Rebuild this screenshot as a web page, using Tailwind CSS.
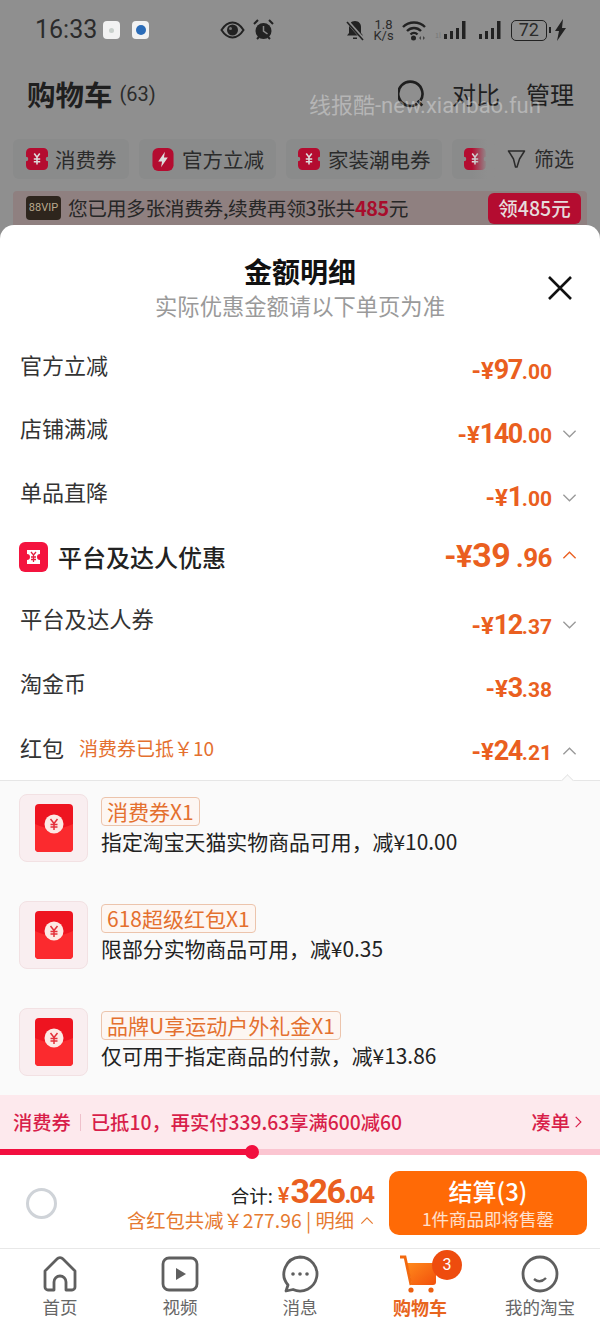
<!DOCTYPE html>
<html>
<head>
<meta charset="utf-8">
<script src="https://cdn.jsdelivr.net/npm/@tailwindcss/browser@4"></script>
</head>
<body class="bg-[#8f8f8f] font-['Noto_Sans_CJK_SC',sans-serif]">
<svg class="hidden">
  <symbol id="coupon" viewBox="0 0 24 24">
    <path d="M5 0h14a5 5 0 0 1 5 5v4.500a2.500 2.500 0 0 0 0 5V19a5 5 0 0 1-5 5H5a5 5 0 0 1-5-5v-4.500a2.500 2.500 0 0 0 0-5V5a5 5 0 0 1 5-5z" fill="currentColor"/>
    <path d="M9 6l3 4 3-4M12 10v8M8.500 12h7M8.500 15h7" fill="none" stroke="#ddd" stroke-width="1.700"/>
  </symbol>
  <symbol id="envelope" viewBox="0 0 38 48">
    <rect width="38" height="48" rx="4" fill="#ee1420"/>
    <path d="M0 20q19 9 38 0v24a4 4 0 0 1-4 4H4a4 4 0 0 1-4-4z" fill="#fb2a2e"/>
    <circle cx="19" cy="20" r="9.500" fill="#fde9e4"/>
    <path d="M15.500 15l3.500 4.500 3.500-4.500M19 19.500v6.500M15.500 20.500h7M15.500 23h7" fill="none" stroke="#e3303a" stroke-width="1.500"/>
  </symbol>
  <symbol id="chev" viewBox="0 0 16 10">
    <path d="M1.500 1.500 8 8l6.500-6.500" fill="none" stroke="currentColor" stroke-width="1.400"/>
  </symbol>
</svg>

<!-- dimmed cart page behind the sheet -->
<div class="relative h-[225px] overflow-hidden text-[#1f1f1f]">
  <div class="flex items-center h-[60px] pl-[35px] pr-[33px]">
    <span class="text-[25px] font-['Roboto',sans-serif] text-[#2b2b2b] w-[68px]">16:33</span>
    <span class="w-[17px] h-[18px] rounded-[4px] bg-[#f2f2f2] flex items-center justify-center"><span class="w-[5px] h-[5px] rounded-full bg-[#c9d0cc]"></span></span>
    <span class="w-[17px] h-[18px] rounded-[4px] bg-[#f2f2f2] flex items-center justify-center ml-[12px]"><span class="w-[10px] h-[10px] rounded-full bg-[#2b6cb8]"></span></span>
    <svg class="ml-[71px]" width="25" height="18" viewBox="0 0 25 18"><path d="M1.500 9C5 3.500 8.500 1.500 12.500 1.500S20 3.500 23.500 9C20 14.500 16.500 16.500 12.500 16.500S5 14.500 1.500 9z" fill="none" stroke="#222" stroke-width="2"/><circle cx="12.500" cy="9" r="5.500" fill="#222"/><circle cx="10.500" cy="7.500" r="1.500" fill="#777"/></svg>
    <svg class="ml-[8px]" width="21" height="22" viewBox="0 0 21 22"><circle cx="10.500" cy="12" r="8" fill="#222"/><path d="M10.500 7v5l4 3" fill="none" stroke="#888" stroke-width="1.500"/><path d="M1 5l4-4M20 5l-4-4M4 20l2-2M17 20l-2-2" stroke="#222" stroke-width="2"/></svg>
    <svg class="ml-[72px]" width="18" height="22" viewBox="0 0 18 22"><path d="M9 2c4 0 6 3 6 6v6l2 2.500H1L3 14V8c0-3 2-6 6-6z" fill="#222"/><path d="M7 18.500h4v1.500H7z" fill="#222"/><path d="M1 2l16 18" stroke="#8f8f8f" stroke-width="3.500"/><path d="M1 3l16 18" stroke="#222" stroke-width="1.600"/></svg>
    <span class="ml-[9px] w-[21px] flex flex-col items-center text-[13px] leading-[11px] font-['Roboto',sans-serif] text-[#2b2b2b]"><span>1.8</span><span>K/s</span></span>
    <svg class="ml-[7px]" width="26" height="22" viewBox="0 0 26 22"><path d="M2 8c6-6 16-6 22 0M6 12c4-4 10-4 14 0M9.500 15.500c2-2 5-2 7 0" fill="none" stroke="#222" stroke-width="2.400"/><circle cx="12.500" cy="19" r="2.500" fill="#222"/><path d="M18 19l2-2v4zM24 19l-2-2v4z" fill="#444"/></svg>
    <span class="ml-[8px] text-[7px] leading-none text-[#777] self-end mb-[21px]">1l</span>
    <svg class="ml-[1px]" width="26" height="20" viewBox="0 0 26 20"><path d="M2 14h3v5H2zM8 11h3v8H8zM14 8h3v11h-3zM20 1h3.500v18H20z" fill="#222"/></svg>
    <svg class="ml-[10px]" width="26" height="20" viewBox="0 0 26 20"><path d="M1 14h3v5H1zM7 11h3v8H7zM13 8h3v11h-3zM19 1h3.500v18H19z" fill="#222"/></svg>
    <span class="ml-[7px] w-[36px] h-[21px] border-[1.500px] border-[#222] rounded-[5px] flex items-center justify-center text-[18px] leading-none font-['Roboto',sans-serif] text-[#2b2b2b]">72</span>
    <span class="ml-[2px] w-[2px] h-[6px] bg-[#222]"></span>
    <svg class="ml-[3px]" width="13" height="22" viewBox="0 0 13 22"><path d="M9 0 1 12h4l-2 10 9-13H8z" fill="#222"/></svg>
  </div>

  <div class="flex items-center h-[68px] pl-[27px] pr-[26px]">
    <span class="text-[28.500px] font-bold leading-none">购物车</span>
    <span class="ml-[7px] text-[20px] leading-none font-['Roboto',sans-serif] text-[#2b2b2b]">(63)</span>
    <svg class="ml-auto" width="28" height="28" viewBox="0 0 30 30"><path d="M20.500 25.500a13 13 0 1 1 3.500-3.500M21 22l5 5.500" fill="none" stroke="#1f1f1f" stroke-width="2.800"/></svg>
    <span class="ml-[26px] text-[24px] leading-none">对比</span>
    <span class="ml-[26px] text-[24px] leading-none">管理</span>
  </div>

  <div class="flex items-center gap-[10px] h-[40px] mt-[11px] pl-[13px] pr-[26px] text-[20.500px] text-[#2b2b2b]">
    <div class="flex items-center w-[116px] h-[40px] pl-[13px] bg-[#8a8b8b] rounded-[6px]">
      <svg class="text-[#b40c30] shrink-0" width="22" height="22"><use href="#coupon"/></svg>
      <span class="ml-[7px] leading-none">消费券</span>
    </div>
    <div class="flex items-center w-[137px] h-[40px] pl-[13px] bg-[#8a8b8b] rounded-[6px]">
      <svg class="shrink-0" width="22" height="23" viewBox="0 0 22 24"><rect width="22" height="24" rx="6" fill="#b40c30"/><path d="M13 4 6 14h4l-1 6 7-10h-4z" fill="#ddd"/></svg>
      <span class="ml-[8px] leading-none">官方立减</span>
    </div>
    <div class="flex items-center w-[156px] h-[40px] pl-[12px] bg-[#8a8b8b] rounded-[6px]">
      <svg class="text-[#b40c30] shrink-0" width="22" height="22"><use href="#coupon"/></svg>
      <span class="ml-[8px] leading-none">家装潮电券</span>
    </div>
    <div class="relative flex items-center w-[45px] h-[40px] pl-[12px] bg-[#8a8b8b] rounded-l-[6px]">
      <svg class="text-[#b40c30] shrink-0" width="22" height="22"><use href="#coupon"/></svg>
      <div class="absolute left-[20px] top-0 w-[25px] h-[40px] bg-linear-to-r from-transparent to-[#8f8f8f] to-60%"></div>
    </div>
    <svg class="ml-0" width="19" height="20" viewBox="0 0 19 20"><path d="M1.500 2h16l-5 8-2.500 8h-1.500L6.500 10z" fill="none" stroke="#2b2b2b" stroke-width="1.500" stroke-linejoin="round"/></svg>
    <span class="ml-[-2px] text-[20px] leading-none whitespace-nowrap">筛选</span>
  </div>

  <div class="flex items-center h-[40px] mt-[12px] mx-[13px] pl-[13px] pr-[6px] bg-[#8f8080] rounded-t-[4px] pb-[6px]">
    <span class="w-[35px] h-[24px] rounded-[4px] bg-[#2e251d] text-[#b9a98e] text-[11px] font-['Roboto',sans-serif] flex items-center justify-center">88VIP</span>
    <span class="ml-[7px] text-[19.700px] leading-none tracking-[-0.320px] text-[#262626] whitespace-nowrap">您已用多张消费券,续费再领3张共<b class="text-[#a80d2c] font-bold">485</b>元</span>
    <span class="ml-auto w-[93px] h-[31px] rounded-[6px] bg-[#b40c30] text-[#e6dcdc] text-[19.500px] font-medium leading-none flex items-center justify-center">领485元</span>
  </div>

  <div class="absolute left-[309px] top-[94px] text-[22px] leading-[24px] text-white/35 whitespace-nowrap font-['Roboto','Noto_Sans_CJK_SC',sans-serif]">线报酷-new.xianbao.fun</div>
</div>

<!-- amount detail sheet -->
<div class="bg-white rounded-t-[14px] h-[1101px] flex flex-col">
  <div class="relative h-[110px] flex flex-col items-center pt-[28px]">
    <h1 class="text-[28px] font-bold leading-[36px] text-[#111]">金额明细</h1>
    <p class="text-[22.300px] leading-[30px] mt-px text-[#9a9a9a]">实际优惠金额请以下单页为准</p>
    <svg class="absolute left-[547px] top-[50px]" width="26" height="26" viewBox="0 0 26 26"><path d="M2 2l22 22M24 2 2 24" stroke="#111" stroke-width="2.600"/></svg>
  </div>

  <div class="flex items-center justify-between h-[63.600px] pl-5 pr-[23px]">
    <span class="mb-[6px] text-[22px] leading-none text-[#333]">官方立减</span>
    <div class="flex items-center pt-[8px]">
      <span class="font-['Roboto',sans-serif] font-bold text-[#ea5f20] text-[21px] leading-none"><span class="text-[24px]">-¥</span><span class="text-[27px] tracking-[-1.500px]">97</span>.00</span>
      <span class="w-[25px]"></span>
    </div>
  </div>
  <div class="flex items-center justify-between h-[63.600px] pl-5 pr-[23px]">
    <span class="mb-[6px] text-[22px] leading-none text-[#333]">店铺满减</span>
    <div class="flex items-center pt-[8px]">
      <span class="font-['Roboto',sans-serif] font-bold text-[#ea5f20] text-[21px] leading-none"><span class="text-[24px]">-¥</span><span class="text-[27px] tracking-[-1.500px]">140</span>.00</span>
      <svg class="ml-[10px] text-[#999]" width="15" height="10"><use href="#chev"/></svg>
    </div>
  </div>
  <div class="flex items-center justify-between h-[63.600px] pl-5 pr-[23px]">
    <span class="mb-[6px] text-[22px] leading-none text-[#333]">单品直降</span>
    <div class="flex items-center pt-[8px]">
      <span class="font-['Roboto',sans-serif] font-bold text-[#ea5f20] text-[21px] leading-none"><span class="text-[24px]">-¥</span><span class="text-[27px] tracking-[-1.500px]">1</span>.00</span>
      <svg class="ml-[10px] text-[#999]" width="15" height="10"><use href="#chev"/></svg>
    </div>
  </div>
  <div class="flex items-center justify-between h-[63.600px] pl-[19px] pr-[23px]">
    <div class="flex items-center mb-[2px]">
      <svg width="29" height="30" viewBox="0 0 29 30"><rect width="29" height="30" rx="6" fill="#f4143f"/><path d="M8 8h13v4a3 3 0 0 0 0 6v4H8v-4a3 3 0 0 0 0-6z" fill="#fff"/><path d="M12 10l2.500 3 2.500-3M14.500 13v7M12 15h5M12 17.500h5" fill="none" stroke="#e3203f" stroke-width="1.300"/></svg>
      <span class="ml-[10px] text-[24px] font-medium leading-none text-[#222]">平台及达人优惠</span>
    </div>
    <div class="flex items-center mb-[5px]">
      <span class="font-['Roboto',sans-serif] font-bold text-[#ea5f20] text-[26px] leading-none tracking-[-0.500px]"><span class="text-[31px]">-¥</span><span class="text-[34px]">39</span> .96</span>
      <svg class="ml-[10px] text-[#ea5f20]" width="15" height="10" style="transform:rotate(180deg)"><use href="#chev"/></svg>
    </div>
  </div>
  <div class="flex items-center justify-between h-[63.600px] pl-5 pr-[23px]">
    <span class="mb-[6px] text-[22.300px] leading-none text-[#333]">平台及达人券</span>
    <div class="flex items-center pt-[8px]">
      <span class="font-['Roboto',sans-serif] font-bold text-[#ea5f20] text-[21px] leading-none"><span class="text-[24px]">-¥</span><span class="text-[27px] tracking-[-1.500px]">12</span>.37</span>
      <svg class="ml-[10px] text-[#999]" width="15" height="10"><use href="#chev"/></svg>
    </div>
  </div>
  <div class="flex items-center justify-between h-[63.600px] pl-5 pr-[23px]">
    <span class="mb-[6px] text-[22px] leading-none text-[#333]">淘金币</span>
    <div class="flex items-center pt-[8px]">
      <span class="font-['Roboto',sans-serif] font-bold text-[#ea5f20] text-[21px] leading-none"><span class="text-[24px]">-¥</span><span class="text-[27px] tracking-[-1.500px]">3</span>.38</span>
      <span class="w-[25px]"></span>
    </div>
  </div>
  <div class="flex items-center justify-between h-[63.600px] pl-5 pr-[23px]">
    <div class="flex items-center mb-[2px]">
      <span class="text-[22px] leading-none text-[#333]">红包</span>
      <span class="ml-[15px] text-[19px] leading-none text-[#e4702f]">消费券已抵￥10</span>
    </div>
    <div class="flex items-center pt-[6px]">
      <span class="font-['Roboto',sans-serif] font-bold text-[#ea5f20] text-[21px] leading-none"><span class="text-[24px]">-¥</span><span class="text-[27px] tracking-[-1.500px]">24</span>.21</span>
      <svg class="ml-[10px] text-[#999]" width="15" height="10" style="transform:rotate(180deg)"><use href="#chev"/></svg>
    </div>
  </div>

  <div class="relative h-[315px] bg-[#fafafa] border-t border-[#e6e6e6] flex flex-col gap-[39px] pt-[13px] pl-[19px]">
    <span class="absolute left-[563px] top-[-5px] w-[9px] h-[9px] rotate-45 bg-[#fafafa] border-l border-t border-[#e6e6e6]"></span>
    <div class="flex">
      <div class="w-[69px] h-[68px] rounded-[8px] bg-[#f9eef0] border border-[#f2e1e3] flex items-center justify-center shrink-0">
        <svg width="38" height="48"><use href="#envelope"/></svg>
      </div>
      <div class="ml-[13px] pt-[3px]">
        <span class="block w-fit h-[29px] px-[5px] rounded-[4px] border border-[#ecc4ac] bg-[#fdf6f2] text-[21px] leading-[26px] text-[#e4702f]">消费券X1</span>
        <p class="text-[20.900px] leading-[30px] text-[#222] whitespace-nowrap">指定淘宝天猫实物商品可用，减¥10.00</p>
      </div>
    </div>
    <div class="flex">
      <div class="w-[69px] h-[68px] rounded-[8px] bg-[#f9eef0] border border-[#f2e1e3] flex items-center justify-center shrink-0">
        <svg width="38" height="48"><use href="#envelope"/></svg>
      </div>
      <div class="ml-[13px] pt-[3px]">
        <span class="block w-fit h-[29px] px-[5px] rounded-[4px] border border-[#ecc4ac] bg-[#fdf6f2] text-[21px] leading-[26px] text-[#e4702f]">618超级红包X1</span>
        <p class="text-[20.900px] leading-[30px] text-[#222] whitespace-nowrap">限部分实物商品可用，减¥0.35</p>
      </div>
    </div>
    <div class="flex">
      <div class="w-[69px] h-[68px] rounded-[8px] bg-[#f9eef0] border border-[#f2e1e3] flex items-center justify-center shrink-0">
        <svg width="38" height="48"><use href="#envelope"/></svg>
      </div>
      <div class="ml-[13px] pt-[3px]">
        <span class="block w-fit h-[29px] px-[5px] rounded-[4px] border border-[#ecc4ac] bg-[#fdf6f2] text-[21px] leading-[26px] text-[#e4702f]">品牌U享运动户外礼金X1</span>
        <p class="text-[20.900px] leading-[30px] text-[#222] whitespace-nowrap">仅可用于指定商品的付款，减¥13.86</p>
      </div>
    </div>
  </div>

  <div class="flex items-center h-[54px] bg-[#fde9ed] pl-[13px] pr-[15px] text-[19.300px] font-medium leading-none text-[#d81e4a]">
    <span>消费券</span>
    <span class="w-px h-[17px] bg-[#efc0cb] ml-[9px] mr-[10px]"></span>
    <span class="whitespace-nowrap">已抵10，再实付339.63享满600减60</span>
    <span class="ml-auto">凑单</span>
    <svg class="ml-[2px] rotate-[-90deg] text-[#d81e4a]" width="13" height="8"><use href="#chev"/></svg>
  </div>
  <div class="relative h-[6px] bg-[#fbc5d1]">
    <div class="h-full w-[252px] bg-[#f20f3f]"></div>
    <span class="absolute left-[245px] top-[-4px] w-[14px] h-[14px] rounded-full bg-[#f20f3f]"></span>
  </div>

  <div class="flex items-center h-[93px] pt-[3px] pl-[26px] pr-[13px] bg-white">
    <span class="w-[31px] h-[31px] rounded-full border-[3px] border-[#cfd3d8]"></span>
    <div class="ml-auto flex flex-col items-end">
      <div class="flex items-baseline h-[32px]">
        <span class="text-[18.500px] text-[#222] leading-none">合计:</span>
        <span class="ml-[5px] text-[22px] font-['Roboto',sans-serif] font-medium text-[#ea5f20] leading-none">¥</span>
        <span class="ml-[1px] font-['Roboto',sans-serif] font-bold text-[#ea5f20] text-[34px] leading-none tracking-[-1.500px]">326</span>
        <span class="font-['Roboto',sans-serif] font-bold text-[#ea5f20] text-[24px] leading-none tracking-[-2px] mr-[1px]">.04</span>
      </div>
      <div class="flex items-center mt-[2px] text-[19.300px] leading-[24px] text-[#e67a30] whitespace-nowrap">
        <span>含红包共减￥277.96 | 明细</span>
        <svg class="ml-[6px] text-[#e67a30]" width="14" height="9" style="transform:rotate(180deg)"><use href="#chev"/></svg>
      </div>
    </div>
    <div class="ml-[15px] w-[198px] h-[64px] rounded-[10px] bg-[#ff6a06] flex flex-col items-center justify-center text-white">
      <span class="text-[24px] font-medium leading-[32px]">结算(3)</span>
      <span class="text-[17.500px] leading-[24px] text-white/80">1件商品即将售罄</span>
    </div>
  </div>

  <nav class="flex h-[77px] border-t border-[#e8e8e8] bg-white text-[17.500px] leading-[24px] text-[#666]">
    <div class="w-1/5 flex flex-col items-center">
      <svg class="mt-[6px]" width="36" height="38" viewBox="0 0 36 38"><path d="M3 16 15 4a4 4 0 0 1 6 0l12 12v16a3 3 0 0 1-3 3h-6V27a6 6 0 0 0-12 0v8H6a3 3 0 0 1-3-3z" fill="none" stroke="#5f5f5f" stroke-width="2.800" stroke-linejoin="round"/></svg>
      <span class="mt-[2px]">首页</span>
    </div>
    <div class="w-1/5 flex flex-col items-center">
      <svg class="mt-[6px]" width="38" height="38" viewBox="0 0 38 38"><rect x="2" y="3" width="34" height="32" rx="6" fill="none" stroke="#5f5f5f" stroke-width="2.800"/><path d="M15 13l10 6-10 6z" fill="#5f5f5f"/></svg>
      <span class="mt-[2px]">视频</span>
    </div>
    <div class="w-1/5 flex flex-col items-center">
      <svg class="mt-[6px]" width="38" height="38" viewBox="0 0 38 38"><path d="M19 2a17 17 0 1 1-7 32.500L5 36l2-6A17 17 0 0 1 19 2z" fill="none" stroke="#5f5f5f" stroke-width="2.800" stroke-linejoin="round"/><circle cx="12" cy="19" r="1.800" fill="#5f5f5f"/><circle cx="19" cy="19" r="1.800" fill="#5f5f5f"/><circle cx="26" cy="19" r="1.800" fill="#5f5f5f"/></svg>
      <span class="mt-[2px]">消息</span>
    </div>
    <div class="relative w-1/5 flex flex-col items-center">
      <svg class="mt-[6px] ml-[-4px]" width="38" height="38" viewBox="0 0 38 38">
        <defs><linearGradient id="cartfill" x1="0" y1="0" x2="1" y2="1"><stop offset="0" stop-color="#ff8a1c"/><stop offset="1" stop-color="#f2500c"/></linearGradient></defs>
        <path d="M8 8h29v19a3 3 0 0 1-3 3H13z" fill="url(#cartfill)"/>
        <path d="M1 2h5l6 28" fill="none" stroke="#f2690f" stroke-width="2.800"/>
        <circle cx="12" cy="35" r="2.600" fill="#ec5f10"/><circle cx="32" cy="35" r="2.600" fill="#ec5f10"/>
      </svg>
      <span class="mt-[2px] text-[18px] font-bold text-[#e8651e]">购物车</span>
      <span class="absolute left-[72px] top-px w-[30px] h-[30px] rounded-full bg-[#ee4c0e] text-white text-[16px] font-['Roboto',sans-serif] flex items-center justify-center">3</span>
    </div>
    <div class="w-1/5 flex flex-col items-center">
      <svg class="mt-[6px]" width="38" height="38" viewBox="0 0 38 38"><circle cx="19" cy="19" r="17" fill="none" stroke="#5f5f5f" stroke-width="2.800"/><path d="M13 24q6 5 12-1" fill="none" stroke="#5f5f5f" stroke-width="2.400"/></svg>
      <span class="mt-[2px]">我的淘宝</span>
    </div>
  </nav>
</div>
</body>
</html>
